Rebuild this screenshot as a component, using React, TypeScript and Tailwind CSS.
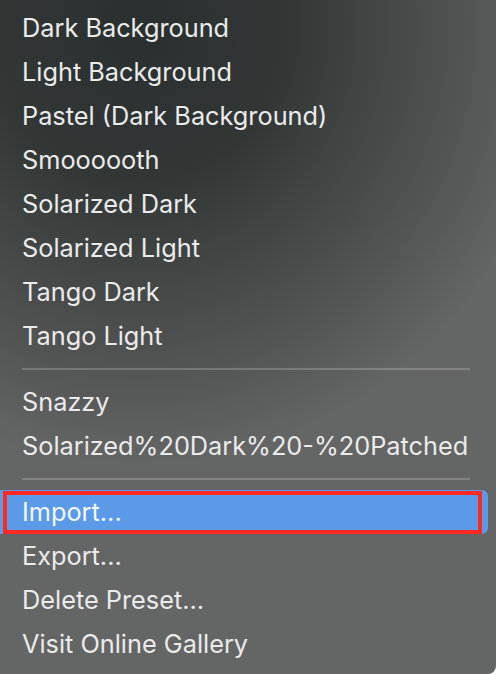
const groups: string[][] = [
  [
    'Dark Background',
    'Light Background',
    'Pastel (Dark Background)',
    'Smoooooth',
    'Solarized Dark',
    'Solarized Light',
    'Tango Dark',
    'Tango Light',
  ],
  ['Snazzy', 'Solarized%20Dark%20-%20Patched'],
]

const actions = ['Export...', 'Delete Preset...', 'Visit Online Gallery']

function Item({ label }: { label: string }) {
  return (
    <div className="flex h-[44px] items-center pl-[22px] text-[25.3px] text-[#ebebeb] leading-none">
      {label}
    </div>
  )
}

function Separator() {
  return (
    <div className="flex h-[22px] items-center pl-[22px] pr-[26px]">
      <div className="h-[2px] w-full bg-white/20" />
    </div>
  )
}

export default function App() {
  return (
    <div
      className="relative h-[674px] w-[496px] overflow-hidden rounded-br-[8px] bg-[#646565] bg-[radial-gradient(ellipse_85%_65%_at_28%_4%,#29302f_0%,#323736_35%,#4c4f4e_70%,#646565_100%)] pt-[6px]"
      style={{ fontFamily: 'Inter, "Noto Sans", sans-serif' }}
    >
      {groups.map((group, i) => (
        <div key={i}>
          {group.map((label) => (
            <Item key={label} label={label} />
          ))}
          <Separator />
        </div>
      ))}

      <div className="relative mr-[8px] flex h-[44px] items-center rounded-r-[6px] bg-[#5a9ae6] pl-[22px] text-[25.3px] leading-none text-[#f4f7fc]">
        Import...
        <div className="pointer-events-none absolute left-[3px] top-[1px] h-[43px] w-[479px] border-[4px] border-[#ff2a22]" />
      </div>

      {actions.map((label) => (
        <Item key={label} label={label} />
      ))}
    </div>
  )
}
